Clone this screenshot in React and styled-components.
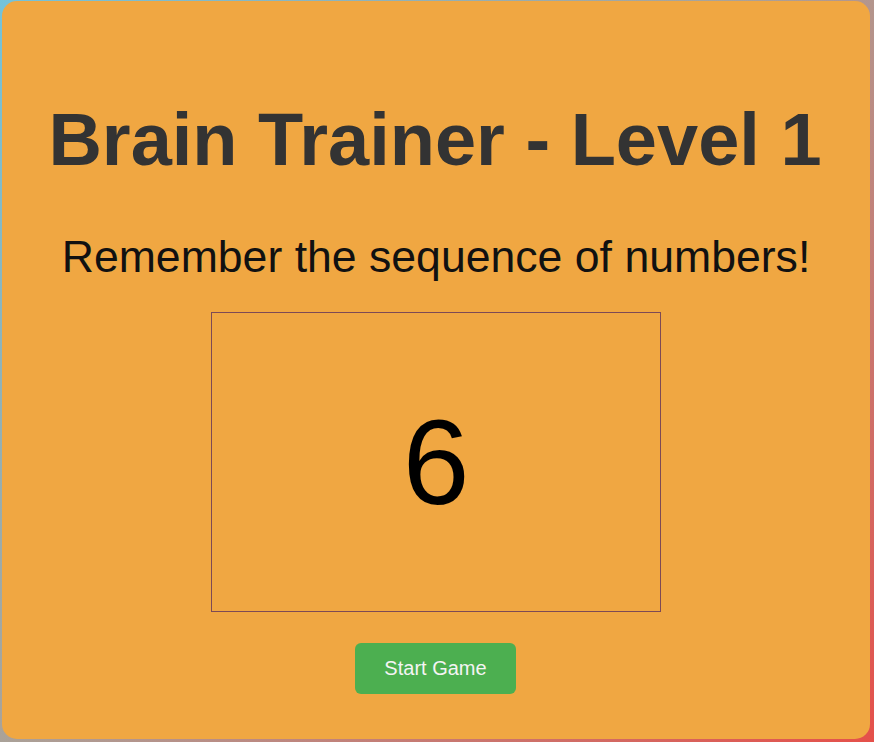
import React from 'react'
import styled, { createGlobalStyle } from 'styled-components'

const GlobalStyle = createGlobalStyle`
  html, body {
    margin: 0;
    padding: 0;
  }
  body {
    min-height: 742px;
    background: linear-gradient(135deg, #74c3da 0%, #a9a39a 45%, #e5504a 100%);
    font-family: "Liberation Sans", Arial, sans-serif;
  }
`

const Card = styled.div`
  box-sizing: border-box;
  margin: 1px 4px 0 2px;
  height: 738px;
  background: #f0a742;
  border-radius: 15px;
  display: flex;
  flex-direction: column;
  align-items: center;
  padding-top: 102px;
`

const Title = styled.h1`
  margin: 0 2px 0 0;
  font-size: 74px;
  line-height: 74px;
  font-weight: 700;
  color: #333333;
`

const Subtitle = styled.p`
  margin: 58px 0 0;
  font-size: 44.6px;
  line-height: 44px;
  color: #111111;
`

const NumberBox = styled.div`
  box-sizing: border-box;
  margin-top: 33px;
  width: 450px;
  height: 300px;
  border: 1px solid #7d4a55;
  display: flex;
  align-items: center;
  justify-content: center;
  font-size: 120px;
  line-height: 1;
  color: #000000;
`

const StartButton = styled.button`
  margin: 31px 1px 0 0;
  width: 161px;
  height: 51px;
  border: none;
  border-radius: 6px;
  background: #4caf50;
  color: #f4f4f4;
  font-family: "Liberation Sans", Arial, sans-serif;
  font-size: 20px;
  cursor: pointer;
`

export default function App() {
  return (
    <>
      <GlobalStyle />
      <Card>
        <Title>Brain Trainer - Level 1</Title>
        <Subtitle>Remember the sequence of numbers!</Subtitle>
        <NumberBox>6</NumberBox>
        <StartButton>Start Game</StartButton>
      </Card>
    </>
  )
}
